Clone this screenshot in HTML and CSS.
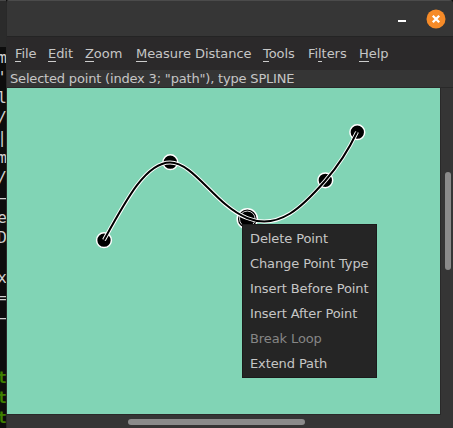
FILE: index.html
```html
<!DOCTYPE html>
<html lang="en">
<head>
<meta charset="utf-8">
<title>Path editor</title>
<link rel="stylesheet" href="styles.css">
</head>
<body>
<div class="desktop">
<div class="behind"><pre class="terminal">m
'
l
/
|
m
/
—
e
D

x
=
—


<b>t</b>
<b>t</b>
<b>t</b></pre></div>
<main class="window">
<header class="titlebar">
<span class="minimize"></span>
<span class="close"><svg width="20" height="20" viewBox="0 0 20 20"><circle cx="10" cy="10" r="9.5" fill="#f68b28"/><path d="M6.8 6.8L13.2 13.2M13.2 6.8L6.8 13.2" stroke="#fff" stroke-width="2.3"/></svg></span>
</header>
<nav class="menubar">
<span class="file"><u>F</u>ile</span><span class="edit"><u>E</u>dit</span><span class="zoom"><u>Z</u>oom</span><span class="measure"><u>M</u>easure Distance</span><span class="tools"><u>T</u>ools</span><span class="filters">Fi<u>l</u>ters</span><span class="help"><u>H</u>elp</span>
</nav>
<div class="status">Selected point (index 3; "path"), type SPLINE</div>
<div class="workspace">
<div class="canvas">
<svg class="drawing" width="433" height="326" viewBox="7 88 433 326">
<g fill="#000" stroke="#fff" stroke-width="1.5">
<circle cx="104" cy="240.2" r="7.4"/><circle cx="170.3" cy="162.2" r="7.4"/><circle cx="325.3" cy="180.3" r="7.4"/><circle cx="357.3" cy="132.2" r="7.4"/>
<circle cx="247.3" cy="218.9" r="10.1"/><circle cx="247.3" cy="218.9" r="7.8" stroke-width=".8"/>
</g>
<g fill="none">
<path class="halo" d="M104 240C126 200 146 162.5 170 162.5S215 205 247 218S303 206 325 181C339 165 349 149 357 132"/>
<path class="curve" d="M104 240C126 200 146 162.5 170 162.5S215 205 247 218S303 206 325 181C339 165 349 149 357 132"/>
</g>
</svg>
<ul class="context">
<li>Delete Point</li><li>Change Point Type</li><li>Insert Before Point</li><li>Insert After Point</li><li class="disabled">Break Loop</li><li>Extend Path</li>
</ul>
</div>
<div class="vtrack"><div class="vthumb"></div></div>
<div class="htrack"><div class="hthumb"></div></div>
</div>
</main>
</div>
</body>
</html>
```
FILE: styles.css
```css
* { box-sizing: border-box; }
body { margin: 0; overflow: hidden; background: #0d0d0d; font: 13px/16px "DejaVu Sans", sans-serif; color: #c6c6c6; }
.desktop { display: grid; grid-template-columns: 6px 447px; width: 453px; height: 428px; }
.behind { overflow: hidden; border-top: 1px solid #484848; display: flex; flex-direction: column; align-items: flex-end; padding-top: 47px; background: linear-gradient(#2b2b2b 0 46px, #0d0d0d 46px); }
.terminal { margin: 0 -1px 0 0; font: 16px/20px "DejaVu Sans Mono", monospace; color: #d0d0d0; }
.terminal b { color: #3f8000; }
.window { display: flex; flex-direction: column; height: 428px; background: #353535; border-left: 1px solid #292929; overflow: hidden; border-radius: 3px 4px 0 0; }
.titlebar { height: 37px; flex: none; background: #363636; border-top: 1px solid #4b4b4b; border-bottom: 1px solid #242424; display: flex; justify-content: flex-end; align-items: center; padding-right: 7px; gap: 20px; }
.minimize { width: 8px; height: 2px; background: #fff; margin-top: 5px; }
.close { display: flex; width: 20px; height: 20px; }
.menubar { height: 33px; flex: none; background: #2b292a; display: flex; padding: 9px 0 0 8px; white-space: nowrap; letter-spacing: -.05px; }
.menubar u { text-decoration: none; border-bottom: 1px solid #ccc; }
.file { width: 33px; }
.edit { width: 37px; }
.zoom { width: 51px; }
.measure { width: 127px; }
.tools { width: 45px; }
.filters { width: 51px; }
.status { height: 18px; flex: none; padding: 1px 0 0 3px; border-bottom: 1px solid #292929; white-space: nowrap; letter-spacing: -.18px; }
.workspace { flex: 1; display: grid; grid-template-columns: 434px 12px; grid-template-rows: 327px 13px; }
.canvas { position: relative; background: #81d4b5; border-right: 1px solid #292929; border-bottom: 1px solid #292929; overflow: hidden; }
.drawing { display: block; }
.halo { stroke: #fff; stroke-width: 4; }
.curve { stroke: #000; stroke-width: 2; }
.context { position: absolute; left: 235px; top: 136px; width: 135px; height: 154px; margin: 0; padding: 1px 0 0 7px; list-style: none; background: #252525; border: 1px solid #1b1b1b; line-height: 25px; white-space: nowrap; letter-spacing: -.1px; }
.disabled { color: #868686; }
.vtrack { padding: 84px 0 0 4px; }
.vthumb { width: 6px; height: 98px; border-radius: 3px; background: #8b8b8b; }
.htrack { padding: 4px 0 0 121px; }
.hthumb { width: 177px; height: 6px; border-radius: 3px; background: #8b8b8b; }
```
